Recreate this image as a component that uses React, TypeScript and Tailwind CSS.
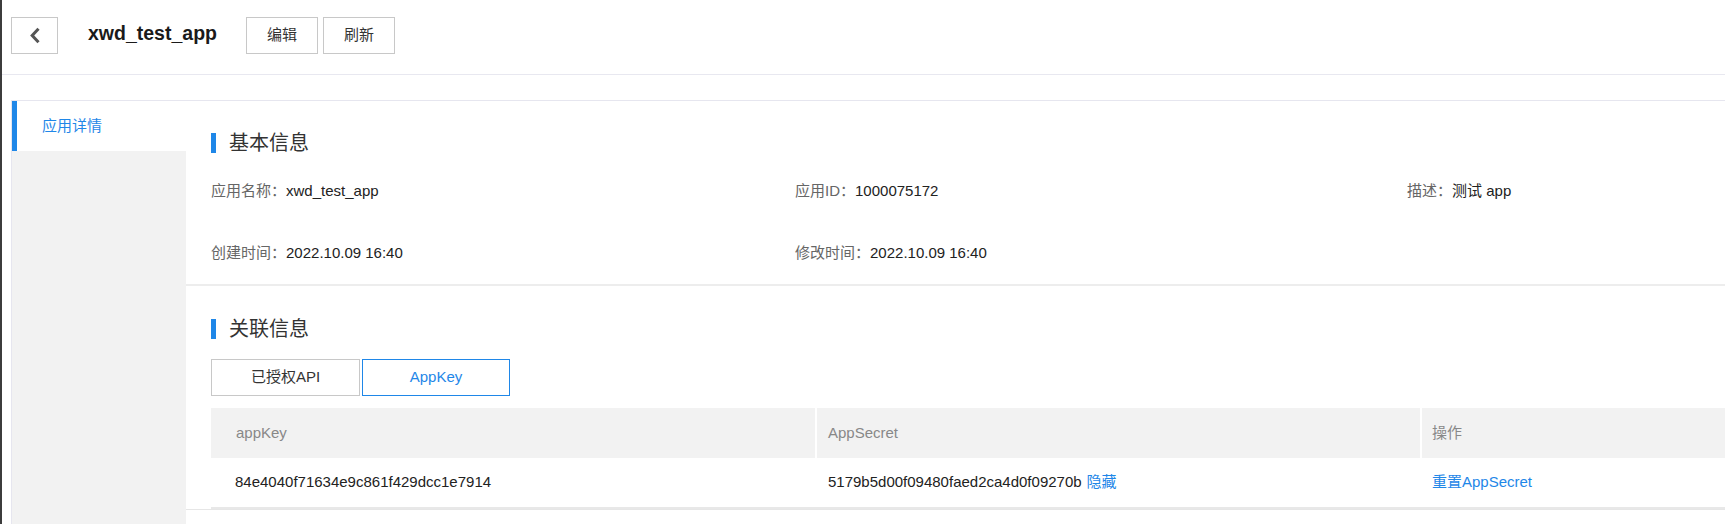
import React from "react";

const font = { fontFamily: '"Liberation Sans", "Noto Sans CJK SC", sans-serif' };

function SectionTitle({ title }: { title: string }) {
  return (
    <div className="flex items-center">
      <div className="h-[20px] w-[5px] bg-[#1f87e8]" />
      <span className="ml-[13px] text-[20px] leading-[20px] text-[#333]">{title}</span>
    </div>
  );
}

function Field({ label, value, className }: { label: string; value: string; className?: string }) {
  return (
    <div className={"text-[15px] leading-[22px] " + (className ?? "")}>
      <span className="text-[#666]">{label}：</span>
      <span className="text-[#222]">{value}</span>
    </div>
  );
}

export default function App() {
  return (
    <div className="flex h-[524px] w-[1725px] overflow-hidden bg-white" style={font}>
      <div className="w-[2px] shrink-0 bg-[#3c3c3c]" />
      <div className="flex flex-1 flex-col">
        {/* header */}
        <div className="flex h-[75px] shrink-0 items-start border-b border-[#e8e8f0] pl-[9px] pt-[17px]">
          <button className="flex h-[37px] w-[47px] items-center justify-center border border-[#c8c8c8] bg-white">
            <svg width="12" height="17" viewBox="0 0 12 17" fill="none">
              <path d="M9.5 1.8 L3.2 8.5 L9.5 15.2" stroke="#555" strokeWidth="3" />
            </svg>
          </button>
          <h1 className="ml-[30px] mt-[3px] text-[19.5px] font-semibold leading-[26px] text-[#1a1a1a]">xwd_test_app</h1>
          <button className="ml-[29px] h-[37px] w-[72px] border border-[#c8c8c8] bg-white text-[15px] text-[#333]">编辑</button>
          <button className="ml-[5px] h-[37px] w-[72px] border border-[#c8c8c8] bg-white text-[15px] text-[#333]">刷新</button>
        </div>

        {/* body */}
        <div className="ml-[9px] mt-[25px] flex flex-1 border-t border-[#e6e6ef]">
          <aside className="flex w-[175px] shrink-0 flex-col border-l border-[#e6e6ef]">
            <div className="flex h-[50px] items-center border-l-[5px] border-[#1f87e8] bg-white pl-[25px] text-[15px] text-[#1f87e8]">
              应用详情
            </div>
            <div className="flex-1 bg-[#f2f2f2]" />
          </aside>

          <main className="flex flex-1 flex-col">
            <section className="h-[185px] border-b-2 border-[#ededed] pl-[25px] pt-[32px]">
              <SectionTitle title="基本信息" />
              <div className="mt-[27px] flex flex-col gap-y-[40px]">
                <div className="flex">
                  <Field className="w-[584px]" label="应用名称" value="xwd_test_app" />
                  <Field className="w-[612px]" label="应用ID" value="1000075172" />
                  <Field label="描述" value="测试 app" />
                </div>
                <div className="flex">
                  <Field className="w-[584px]" label="创建时间" value="2022.10.09 16:40" />
                  <Field className="w-[612px]" label="修改时间" value="2022.10.09 16:40" />
                </div>
              </div>
            </section>

            <section className="border-b border-[#e6e6e6] pl-[25px] pt-[33px]">
              <SectionTitle title="关联信息" />
              <div className="mt-[20px] flex gap-[2px]">
                <button className="h-[37px] w-[149px] border border-[#c8c8c8] bg-white text-[15px] text-[#333]">已授权API</button>
                <button className="h-[37px] w-[148px] border border-[#1f87e8] bg-white text-[15px] text-[#1f87e8]">AppKey</button>
              </div>
              <div className="mt-[12px] border-b-2 border-[#e8e8e8] text-[15px]">
                <div className="grid h-[50px] grid-cols-[604px_605px_1fr] bg-[#f2f2f2] text-[#888]">
                  <div className="flex items-center pl-[25px]">appKey</div>
                  <div className="flex items-center border-l-2 border-white pl-[11px]">AppSecret</div>
                  <div className="flex items-center border-l-2 border-white pl-[10px]">操作</div>
                </div>
                <div className="grid h-[49px] grid-cols-[604px_605px_1fr] text-[#222]">
                  <div className="flex items-center pl-[24px]">84e4040f71634e9c861f429dcc1e7914</div>
                  <div className="flex items-center pl-[13px]">
                    5179b5d00f09480faed2ca4d0f09270b
                    <a className="ml-[5px] cursor-pointer text-[#1f87e8]">隐藏</a>
                  </div>
                  <div className="flex items-center pl-[12px]">
                    <a className="cursor-pointer text-[#1f87e8]">重置AppSecret</a>
                  </div>
                </div>
              </div>
            </section>
            <div className="flex-1" />
          </main>
        </div>
      </div>
    </div>
  );
}
